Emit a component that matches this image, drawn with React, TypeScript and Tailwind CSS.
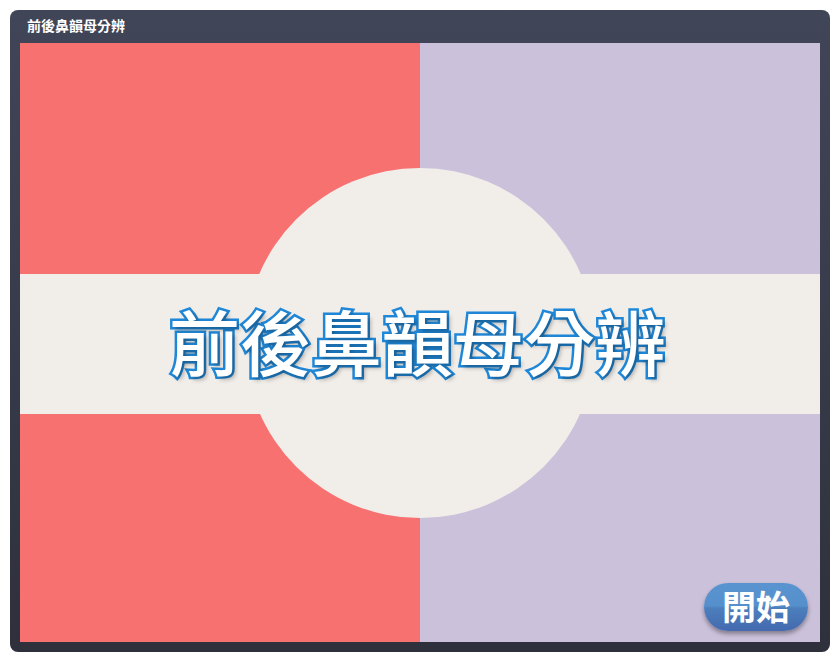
export default function App() {
  return (
    <div className="h-[662px] w-[839px] bg-white pl-[10px] pt-[10px]">
      {/* Window frame */}
      <div className="flex h-[642px] w-[820px] flex-col rounded-[8px] bg-gradient-to-b from-[#414558] to-[#2e313c] px-[10px] pb-[10px]">
        <div className="flex h-[33px] items-center pl-[7px] pb-[3px] font-['Noto_Sans_CJK_TC',sans-serif] text-[14px] font-bold leading-none text-white">
          前後鼻韻母分辨
        </div>

        {/* Stage */}
        <div className="relative flex h-[599px] w-[800px] overflow-hidden">
          <div className="w-[400px] bg-[#f77171]" />
          <div className="w-[400px] bg-[#cbc1da]" />

          <div className="absolute left-0 top-[231px] h-[140px] w-[800px] bg-[#f1eeea]" />
          <div className="absolute left-[225px] top-[125px] h-[350px] w-[350px] rounded-full bg-[#f1eeea]" />

          <div className="absolute left-0 top-[231px] flex h-[140px] w-[800px] items-center justify-center pb-[9px]">
            <h1 className="ml-[-5px] whitespace-nowrap font-['Noto_Sans_CJK_TC',sans-serif] text-[71px] font-medium leading-none text-white [-webkit-text-stroke:5px_#2088d8] [paint-order:stroke_fill] [text-shadow:3px_3px_4px_rgba(0,0,0,0.3)]">
              前後鼻韻母分辨
            </h1>
          </div>

          <button className="absolute bottom-[11px] right-[12px] flex h-[48px] w-[104px] items-center justify-center rounded-[24px] bg-[linear-gradient(#5a94d0_0%,#5590cc_48%,#4c7fbc_52%,#4469af_100%)] pb-[2px] font-['Noto_Sans_CJK_TC',sans-serif] text-[34px] font-bold leading-none text-white shadow-[0_3px_4px_rgba(0,0,0,0.35)]">
            開始
          </button>
        </div>
      </div>
    </div>
  );
}
